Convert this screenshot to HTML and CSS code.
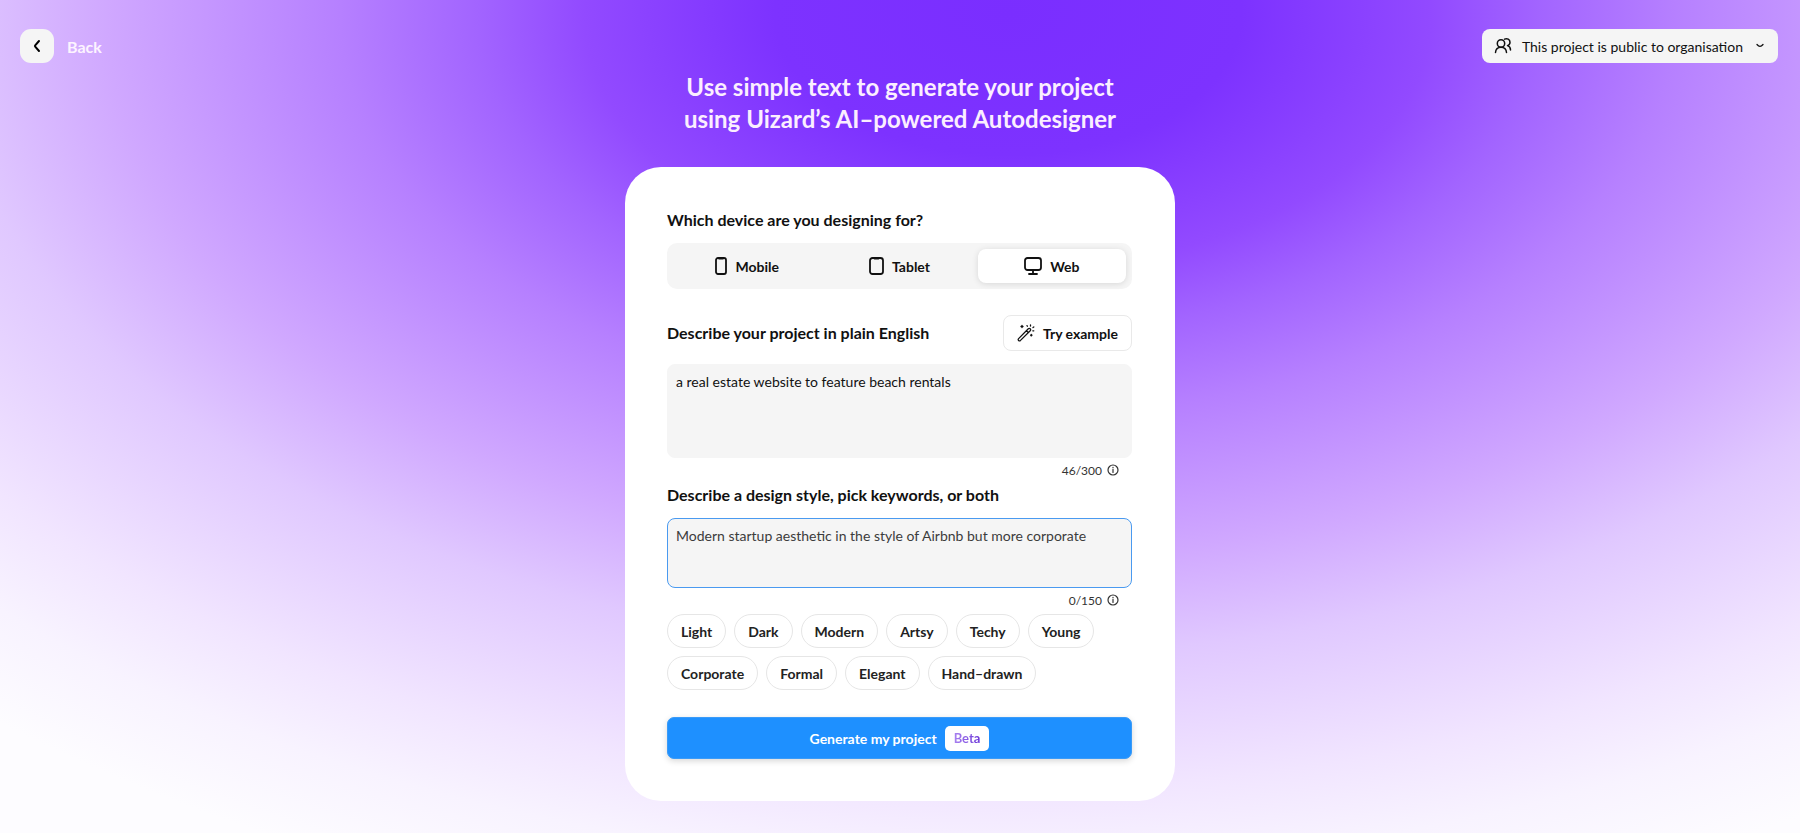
FILE: index.html
```
<!DOCTYPE html>
<html lang="en">
  <head>
    <meta charset="utf-8" />
    <meta name="viewport" content="width=device-width" />
    <title>Autodesigner</title>
    <link rel="stylesheet" href="styles.css">
  </head>

  <body>
    <header class="topbar">
      <a class="back" href="#">
        <span class="back-icon">
          <svg width="16" height="16" viewBox="0 0 16 16"><path d="M10 3 6.200 7.300q-.6.700 0 1.400L10 13" /></svg>
        </span>
        Back
      </a>
      <button class="visibility" type="button">
        <svg class="people" width="18" height="18" viewBox="0 0 18 18">
          <circle cx="7" cy="6.500" r="3.700" />
          <path d="M1.500 15.500c.2-3.500 2.300-5.300 5.500-5.300s5.300 1.800 5.500 5.300" />
          <path d="M10.500 2.200c2.600-1.400 5.500.3 5.500 3 0 1.700-.9 2.900-2.500 3.400 2 .6 3 2 3 4.400" />
        </svg>
        This project is public to organisation
        <svg class="chevron" width="8" height="8" viewBox="0 0 8 8"><path d="M1 2.500q3 3.600 6 0" /></svg>
      </button>
    </header>

    <main>
      <h1>Use simple text to generate your project<br />using Uizard’s AI–powered Autodesigner</h1>

      <form class="card">
        <fieldset class="device">
          <legend>Which device are you designing for?</legend>
          <div class="segments">
            <label>
              <input type="radio" name="device" value="mobile" />
              <svg width="12" height="18" viewBox="0 0 12 18"><rect x="1" y="1" width="10" height="16" rx="2" /><path d="M4 1.500h4" /></svg>
              Mobile
            </label>
            <label>
              <input type="radio" name="device" value="tablet" />
              <svg width="15" height="18" viewBox="0 0 15 18"><rect x="1" y="1" width="13" height="16" rx="2.500" /><path d="M5.500 1.500h4" /></svg>
              Tablet
            </label>
            <label>
              <input type="radio" name="device" value="web" checked />
              <svg width="18" height="18" viewBox="0 0 18 18"><rect x="1" y="1" width="16" height="12" rx="2.500" /><path d="M9 13v4M5 17h8" /></svg>
              Web
            </label>
          </div>
        </fieldset>

        <div class="row">
          <label class="title" for="project">Describe your project in plain English</label>
          <button class="example" type="button">
            <svg width="18" height="18" viewBox="0 0 18 18">
              <path d="M1.600 14.600 11.300 4.800q1-.9 1.900 0t0 1.900L3.500 16.400q-1 .8-1.900 0t0-1.800zM9.500 6.700l1.800 1.900" />
              <path d="M5 1.500v2M4 2.500h2M13.500 1v1M10 1.600l.4.700M16.800 3l-.8.600M15.800 6.800h1M14.300 10.500v1.400M13.600 11.200h1.400" />
            </svg>
            Try example
          </button>
        </div>
        <textarea id="project" class="project">a real estate website to feature beach rentals</textarea>
        <div class="count">
          46/300
          <svg width="12" height="12" viewBox="0 0 12 12"><circle cx="6" cy="6" r="5" /><path d="M6 5.300v3.200M6 3.300v.4" /></svg>
        </div>

        <label class="title" for="style">Describe a design style, pick keywords, or both</label>
        <textarea id="style" class="style" placeholder="Modern startup aesthetic in the style of Airbnb but more corporate"></textarea>
        <div class="count">
          0/150
          <svg width="12" height="12" viewBox="0 0 12 12"><circle cx="6" cy="6" r="5" /><path d="M6 5.300v3.200M6 3.300v.4" /></svg>
        </div>

        <div class="keywords">
          <button type="button">Light</button>
          <button type="button">Dark</button>
          <button type="button">Modern</button>
          <button type="button">Artsy</button>
          <button type="button">Techy</button>
          <button type="button">Young</button>
          <button type="button">Corporate</button>
          <button type="button">Formal</button>
          <button type="button">Elegant</button>
          <button type="button">Hand–drawn</button>
        </div>

        <button class="generate" type="submit">
          Generate my project
          <span class="beta"><span>Beta</span></span>
        </button>
      </form>
    </main>
  </body>
</html>
```
FILE: styles.css
```
* {
  box-sizing: border-box;
}

body {
  margin: 0;
  min-height: 100vh;
  font-family: Lato, sans-serif;
  font-size: 14px;
  color: #111;
  background: radial-gradient(
    1060px 640px at 56% 14px,
    #7a2eff 0%,
    #7d32ff 22%,
    #924aff 40%,
    #a264ff 50%,
    #b680ff 63%,
    #d0a8ff 85%,
    #e0c8ff 100%,
    #f1e5ff 121%,
    #f8f3ff 133%,
    #fdfcff 146%
  );
}

button,
textarea {
  font: inherit;
  color: inherit;
}

button {
  cursor: pointer;
}

svg {
  flex: none;
  fill: none;
  stroke: currentColor;
  stroke-width: 1.5;
  stroke-linecap: round;
  stroke-linejoin: round;
}

.topbar {
  display: flex;
  justify-content: space-between;
  align-items: center;
  padding: 29px 22px 0 20px;
}

.back {
  display: flex;
  align-items: center;
  gap: 13px;
  color: #fdf4ff;
  font-size: 16px;
  font-weight: bold;
  text-decoration: none;
}

.back-icon {
  display: flex;
  align-items: center;
  justify-content: center;
  width: 34px;
  height: 34px;
  border-radius: 11px;
  background: #f5f5f5;
  color: #000;
}

.back-icon svg {
  stroke-width: 2;
}

.visibility {
  display: flex;
  align-items: center;
  height: 34px;
  padding: 0 14px 0 12px;
  border: 0;
  border-radius: 8px;
  background: #f5f5f5;
}

.people {
  margin-right: 10px;
}

.chevron {
  margin-left: 13px;
  stroke-width: 1.3;
}

h1 {
  margin: 8px 0 32px;
  color: #fbeeff;
  font-size: 24px;
  line-height: 32px;
  font-weight: bold;
  text-align: center;
}

.card {
  display: flex;
  flex-direction: column;
  max-width: 550px;
  margin: 0 auto 33px;
  padding: 42px 43px 42px 42px;
  border-radius: 36px;
  background: #fff;
}

fieldset {
  min-width: 0;
  margin: 0;
  padding: 0;
  border: 0;
}

legend,
.title {
  padding: 0;
  font-size: 16px;
  line-height: 22px;
  font-weight: bold;
}

.segments {
  display: grid;
  grid-template-columns: repeat(3, 1fr);
  gap: 4px;
  margin-top: 12px;
  padding: 6px;
  border-radius: 10px;
  background: #f5f5f5;
}

.segments label {
  display: flex;
  align-items: center;
  justify-content: center;
  gap: 8px;
  height: 34px;
  border-radius: 8px;
  font-weight: bold;
  cursor: pointer;
}

.segments label:has(:checked) {
  background: #fff;
  box-shadow: 0 1px 6px rgba(0, 0, 0, 0.12);
}

.segments input {
  position: absolute;
  opacity: 0;
}

.segments svg {
  stroke-width: 1.8;
}

.row {
  display: flex;
  align-items: center;
  justify-content: space-between;
  margin: 26px 0 13px;
}

.example {
  display: flex;
  align-items: center;
  gap: 8px;
  height: 36px;
  padding: 0 13px;
  border: 1px solid #e9e9e9;
  border-radius: 8px;
  background: #fff;
  font-weight: bold;
}

.example svg {
  stroke-width: 1.3;
}

textarea {
  display: block;
  width: 100%;
  padding: 8px;
  border: 1px solid #f5f5f5;
  border-radius: 8px;
  background: #f5f5f5;
  line-height: 18px;
  resize: none;
}

textarea::placeholder {
  color: #3c3c3c;
}

.project {
  height: 94px;
}

.style {
  height: 70px;
  margin-top: 12px;
  border-color: #4a9af0;
}

.count {
  display: flex;
  align-items: center;
  justify-content: flex-end;
  gap: 5px;
  height: 24px;
  margin-bottom: 2px;
  padding-right: 13px;
  color: #333;
  font-size: 12px;
}

.count svg {
  stroke-width: 1.2;
}

.keywords {
  display: flex;
  flex-wrap: wrap;
  gap: 8px;
}

.keywords button {
  height: 34px;
  padding: 0 13px;
  border: 1px solid #e6e6e6;
  border-radius: 17px;
  background: #fff;
  font-weight: bold;
  color: #222;
}

.generate {
  display: flex;
  align-items: center;
  justify-content: center;
  gap: 8px;
  height: 42px;
  margin-top: 27px;
  border: 1px solid #3a9bf8;
  border-radius: 7px;
  background: #1e90ff;
  box-shadow: 0 2px 6px rgba(0, 0, 0, 0.16);
  color: #fff;
  font-weight: bold;
}

.beta {
  padding: 4px 9px;
  border-radius: 5px;
  background: #fff;
  font-size: 13px;
  line-height: 17px;
}

.beta span {
  background: linear-gradient(90deg, #a982f0, #6a35d8);
  background-clip: text;
  color: transparent;
}
```
